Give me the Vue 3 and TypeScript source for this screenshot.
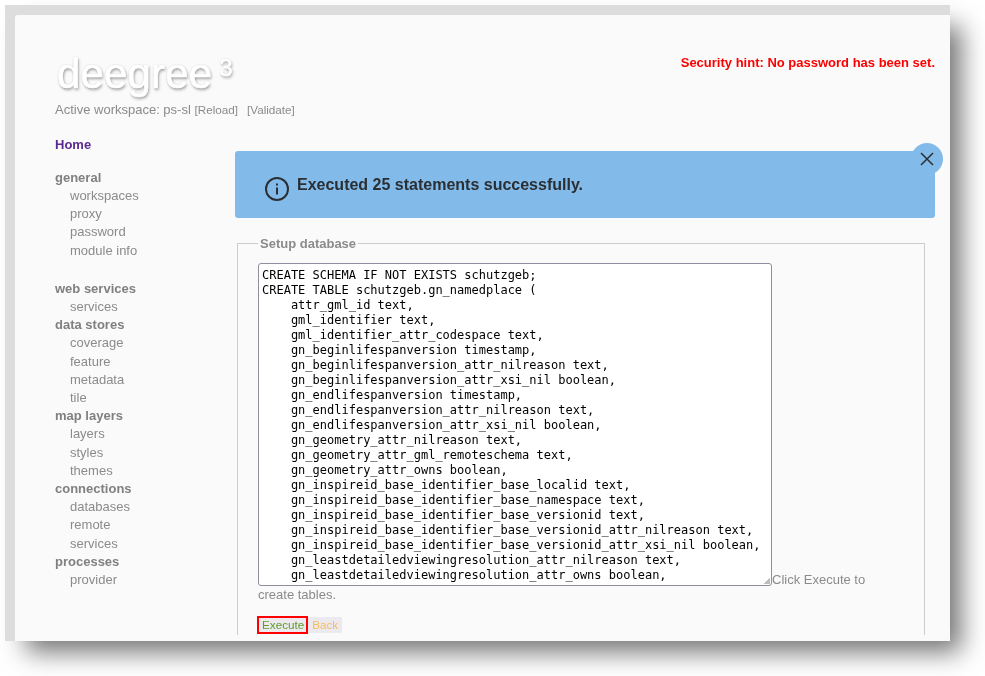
<script setup lang="ts">
interface NavGroup { title: string; items: string[]; gap?: boolean }
const groups: NavGroup[] = [
  { title: 'general', items: ['workspaces', 'proxy', 'password', 'module info'] },
  { title: 'web services', items: ['services'], gap: true },
  { title: 'data stores', items: ['coverage', 'feature', 'metadata', 'tile'] },
  { title: 'map layers', items: ['layers', 'styles', 'themes'] },
  { title: 'connections', items: ['databases', 'remote', 'services'] },
  { title: 'processes', items: ['provider'] },
]
const sql = `CREATE SCHEMA IF NOT EXISTS schutzgeb;
CREATE TABLE schutzgeb.gn_namedplace (
    attr_gml_id text,
    gml_identifier text,
    gml_identifier_attr_codespace text,
    gn_beginlifespanversion timestamp,
    gn_beginlifespanversion_attr_nilreason text,
    gn_beginlifespanversion_attr_xsi_nil boolean,
    gn_endlifespanversion timestamp,
    gn_endlifespanversion_attr_nilreason text,
    gn_endlifespanversion_attr_xsi_nil boolean,
    gn_geometry_attr_nilreason text,
    gn_geometry_attr_gml_remoteschema text,
    gn_geometry_attr_owns boolean,
    gn_inspireid_base_identifier_base_localid text,
    gn_inspireid_base_identifier_base_namespace text,
    gn_inspireid_base_identifier_base_versionid text,
    gn_inspireid_base_identifier_base_versionid_attr_nilreason text,
    gn_inspireid_base_identifier_base_versionid_attr_xsi_nil boolean,
    gn_leastdetailedviewingresolution_attr_nilreason text,
    gn_leastdetailedviewingresolution_attr_owns boolean,`
</script>

<template>
  <div class="screen">
    <div class="window">
      <div class="page">
        <header class="header">
          <div class="brand">
            <div class="logo">deegree<sup class="logo-sup">3</sup></div>
            <div class="workspace">
              Active workspace: ps-sl
              <a class="ws-link">[Reload]</a>
              <a class="ws-link second">[Validate]</a>
            </div>
          </div>
          <div class="hint">Security hint: No password has been set.</div>
        </header>

        <div class="body">
          <nav class="nav">
            <div class="home">Home</div>
            <div v-for="g in groups" :key="g.title" class="group" :class="{ gap: g.gap }">
              <div class="group-title">{{ g.title }}</div>
              <div v-for="item in g.items" :key="item" class="nav-item">{{ item }}</div>
            </div>
          </nav>

          <main class="main">
            <div class="alert">
              <svg class="info" viewBox="0 0 24 24" width="24" height="24" fill="none" stroke="#2b2f33">
                <circle cx="12" cy="12" r="11" stroke-width="2" />
                <path d="M12 10.5v7" stroke-width="2" />
                <path d="M12 6.4v2" stroke-width="2" />
              </svg>
              <span class="alert-text">Executed 25 statements successfully.</span>
              <button class="close" aria-label="Close">
                <svg viewBox="0 0 14 14" width="14" height="14" fill="none" stroke="#2b2f33" stroke-width="1.5">
                  <path d="M1 1l12 12M13 1L1 13" />
                </svg>
              </button>
            </div>

            <div class="setup-clip">
              <fieldset class="setup">
                <legend class="legend">Setup database</legend>
                <div class="flow">
                  <textarea class="sql" readonly spellcheck="false" :value="sql"></textarea>Click Execute to create tables.
                </div>
                <div class="actions">
                  <button class="btn exec">Execute</button><button class="btn back">Back</button>
                </div>
              </fieldset>
            </div>
          </main>
        </div>
      </div>
    </div>
  </div>
</template>

<style>
html, body { margin: 0; background: #fff; }
</style>

<style scoped>
.screen {
  box-sizing: border-box;
  height: 676px;
  padding: 5px 0 0 5px;
  overflow: hidden;
}
.window {
  box-sizing: border-box;
  width: 945px;
  height: 636px;
  padding: 10px 0 0 10px;
  background: #ddd;
  box-shadow: 16px 16px 24px -5px rgba(0, 0, 0, 0.55);
  font-family: "Liberation Sans", Arial, sans-serif;
  will-change: transform;
}
.page {
  height: 100%;
  background: #fafafa;
  border-top-left-radius: 3px;
  overflow: hidden;
  color: #8b8b8b;
  font-size: 13px;
}
.header {
  display: flex;
  justify-content: space-between;
  height: 113px;
  padding: 0 15px 0 40px;
}
.brand { padding-top: 32px; }
.logo {
  height: 50px;
  padding-left: 2px;
  font-size: 42px;
  line-height: 54px;
  letter-spacing: 0.15px;
  color: #fff;
  -webkit-text-stroke: 0.7px #fff;
  text-shadow: 1px 2px 3px rgba(0, 0, 0, 0.36), 0 0 2px rgba(0, 0, 0, 0.22);
  filter: blur(0.4px);
}
.logo-sup {
  margin-left: 7px;
  font-size: 24px;
  line-height: 0;
  vertical-align: 12px;
}
.workspace { margin-top: 5px; line-height: 16px; }
.ws-link { font-size: 11.7px; }
.ws-link.second { margin-left: 9px; }
.hint {
  margin-top: 40px;
  line-height: 16px;
  color: #f00;
  font-weight: 700;
}
.body { display: flex; }
.nav { flex: 0 0 180px; padding-left: 40px; line-height: 18.2px; }
.home { margin-top: 8px; color: #5b2a92; font-weight: 700; }
.home + .group { margin-top: 14.6px; }
.group.gap { margin-top: 20px; }
.group-title { font-weight: 700; color: #808080; }
.nav-item { padding-left: 15px; }
.main {
  flex: 0 0 700px;
  padding-top: 23px;
}
.alert {
  position: relative;
  display: flex;
  align-items: flex-start;
  box-sizing: border-box;
  height: 67px;
  padding: 26px 30px 0;
  background: #82bbea;
  border-radius: 3px;
}
.info { flex: none; margin-right: 8px; }
.alert-text {
  margin-top: -1px;
  font-size: 16px;
  font-weight: 700;
  line-height: 18px;
  color: #2b2f33;
}
.close {
  position: absolute;
  top: -8px;
  right: -8px;
  display: flex;
  align-items: center;
  justify-content: center;
  width: 32px;
  height: 32px;
  padding: 0;
  border: 0;
  border-radius: 50%;
  background: #82bbea;
}
.setup-clip {
  height: 417px;
  overflow: hidden;
}
.setup {
  box-sizing: border-box;
  width: 688px;
  height: 460px;
  margin: 16px 0 0 2px;
  padding: 11px 20px 0;
  border: 1px solid #ccc;
}
.legend { padding: 2px 2px 0; margin-left: 0; font-weight: 700; color: #8b8b8b; line-height: 16px; }
.flow { line-height: 15px; width: 610px; }
.sql {
  box-sizing: border-box;
  width: 514px;
  height: 323px;
  margin: 0;
  padding: 4px 3px 2px;
  border: 1px solid #8e8ea0;
  border-radius: 3px;
  background: #fff;
  color: #000;
  font-family: "DejaVu Sans Mono", monospace;
  font-size: 12px;
  line-height: 15px;
  white-space: pre;
  overflow: hidden;
  resize: both;
  outline: none;
  vertical-align: -2px;
}
.sql::-webkit-resizer {
  background: linear-gradient(135deg, transparent 50%, #bdbdbd 50%) no-repeat right 1px bottom 1px / 6px 6px;
}
.actions { display: flex; align-items: center; margin-top: 14px; margin-left: -1px; }
.btn {
  height: 16px;
  padding: 0 4px;
  border: 0;
  background: #eceaef;
  font-family: inherit;
  font-size: 11.7px;
  line-height: 16px;
}
.exec {
  box-sizing: content-box;
  height: 14px;
  padding: 0 2px 0 3px;
  border: 2px solid #f00;
  line-height: 14px;
  color: #5f9c2b;
}
.back { color: #f6bd5c; }
</style>
